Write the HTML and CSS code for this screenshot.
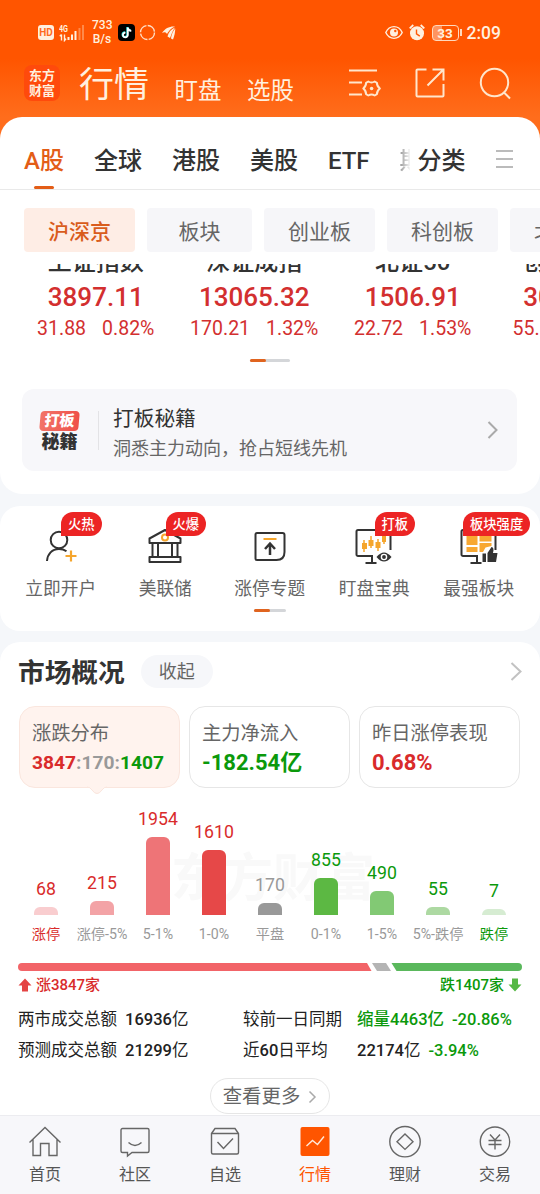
FILE: index.html
```html
<!DOCTYPE html>
<html lang="zh-CN">
<head>
<meta charset="utf-8">
<title>行情</title>
<link rel="stylesheet" href="styles.css">
</head>
<body>
<div class="app">
  <header class="header">
    <div class="status">
      <span class="hd">HD</span>
      <svg class="signal" width="26" height="18" viewBox="0 0 26 18"><path d="M2.500 10.500v6M.8 12.200L2.500 10.500M5.500 10.500v6l1.500-1.700" stroke="#fff0df" stroke-width="1.400" fill="none"/><g fill="#fff0df"><rect x="8.500" y="13" width="2" height="3"/><rect x="12" y="10.500" width="2" height="5.500"/><rect x="15.500" y="7" width="2" height="9"/></g><g fill="#ff8a4a"><rect x="19.500" y="4" width="2" height="12"/><rect x="23" y="1" width="2" height="15"/></g><text x="0" y="8" textLength="9" lengthAdjust="spacingAndGlyphs" class="net">4G</text></svg>
      <span class="speed">733<br>B/s</span>
      <svg class="tik" width="17" height="17" viewBox="0 0 17 17"><rect width="17" height="17" rx="4" fill="#000"/><path d="M9.300 3v7.600a2.400 2.400 0 1 1-2.300-2.400M9.300 3.200c.3 2 1.600 3.100 3.500 3.200" fill="none" stroke="#28e6e3" stroke-width="2"/><path d="M9.800 3.400v7.600a2.400 2.400 0 1 1-2.300-2.400M9.800 3.600c.3 2 1.600 3.100 3.500 3.200" fill="none" stroke="#fff" stroke-width="1.800"/></svg>
      <svg class="ring" width="17" height="17" viewBox="0 0 17 17"><circle cx="8.500" cy="8.500" r="7" fill="none" stroke="#ffe0c8" stroke-width="1.400" stroke-dasharray="9.700 1.300"/></svg>
      <svg class="bird" width="14" height="14" viewBox="0 0 14 14" fill="#fff0df"><path d="M0 7C3 2 8 0 13 .500C9 2 6 6 5 8C4 6 2 6 0 7z"/><path d="M5.500 10.500C6.500 6 9 3 13 1.500C10.500 5 9.500 8 8 12z"/><path d="M9 12.500C9.500 8 11 5 13.300 2.500C13 6.500 12.500 10 11 13.500z"/></svg>
      <span class="grow"></span>
      <svg class="eye" width="18" height="15" viewBox="0 0 18 15"><path d="M.8 7.500C4.500-.3 13.500-.3 17.200 7.500C13.500 15.300 4.500 15.300.8 7.500z" fill="none" stroke="#fff0df" stroke-width="1.400"/><circle cx="9" cy="7.500" r="4" fill="#fff0df"/><circle cx="10.300" cy="6" r="1.200" fill="#ff5a08"/></svg>
      <svg class="alarm" width="16" height="17" viewBox="0 0 16 17"><circle cx="8" cy="9.300" r="7" fill="#fff0df"/><path d="M.7 4.300L4.300 1M15.300 4.300L11.700 1" stroke="#fff0df" stroke-width="1.800"/><path d="M7.500 5.500v4.300l3.300 2.300" fill="none" stroke="#ff5a08" stroke-width="1.400"/></svg>
      <span class="battery">33</span><span class="tip"></span>
      <span class="clock">2:09</span>
    </div>
    <div class="titlebar">
      <div class="logo">东方<br>财富</div>
      <h1 class="title">行情</h1>
      <span class="mode">盯盘</span>
      <span class="mode">选股</span>
      <span class="grow"></span>
      <svg class="tool-a" width="34" height="32" viewBox="0 0 34 32" fill="none" stroke="#ffe6cc" stroke-width="2"><path d="M1 3.500h28M1 15.500h13M1 27.500h13"/><path d="M20.300 14.500q3.200 2 6.400 0l2.200 1.300q0 3.500 3 5.700-3 2.200-3 5.700l-2.200 1.300q-3.200-2-6.400 0l-2.200-1.300q0-3.500-2.800-5.700 2.800-2.200 2.800-5.700z" stroke-linejoin="round"/><circle cx="23.600" cy="21.500" r="1.800" fill="#ffe6cc" stroke="none"/></svg>
      <svg class="tool-b" width="30" height="30" viewBox="0 0 30 30" fill="none" stroke="#ffe6cc" stroke-width="2"><path d="M11.500 1.500H2.500a1 1 0 0 0-1 1v25a1 1 0 0 0 1 1h25a1 1 0 0 0 1-1V16M12.500 17.500L28 2M17.500 1.500h11v11"/></svg>
      <svg class="tool-c" width="33" height="33" viewBox="0 0 33 33" fill="none" stroke="#ffe6cc" stroke-width="2"><circle cx="15.500" cy="15.500" r="13.700"/><path d="M25 25.500l6 6"/></svg>
    </div>
  </header>

  <main class="content">
    <section class="card card-top">
      <nav class="tabs">
        <span class="tab active">A股</span><span class="tab">全球</span><span class="tab">港股</span><span class="tab">美股</span><span class="tab">ETF</span>
        <span class="tab cut">期</span><span class="tab sort">分类</span>
        <span class="burger"><i></i><i></i><i></i></span>
      </nav>
      <div class="chips">
        <span class="chip on">沪深京</span><span class="chip narrow">板块</span><span class="chip">创业板</span><span class="chip">科创板</span><span class="chip">北交所</span>
      </div>
      <div class="indices">
        <div class="index"><div class="name">上证指数</div><div class="price">3897.11</div><div class="change"><span>31.88</span><span>0.82%</span></div></div>
        <div class="index"><div class="name">深证成指</div><div class="price">13065.32</div><div class="change"><span>170.21</span><span>1.32%</span></div></div>
        <div class="index"><div class="name">北证50</div><div class="price">1506.91</div><div class="change"><span>22.72</span><span>1.53%</span></div></div>
        <div class="index"><div class="name">创业板指</div><div class="price">3083.72</div><div class="change"><span>55.12</span><span>1.82%</span></div></div>
      </div>
      <div class="pager"><i></i></div>
      <div class="banner">
        <div class="promo"><div class="promo-tag">打板</div><div class="promo-name">秘籍</div></div>
        <div class="rule"></div>
        <div class="banner-text"><div class="banner-title">打板秘籍</div><div class="banner-sub">洞悉主力动向，抢占短线先机</div></div>
        <svg width="12" height="20" viewBox="0 0 12 20" fill="none" stroke="#aaa" stroke-width="2"><path d="M1.500 2l8 8-8 8"/></svg>
      </div>
    </section>

    <section class="card card-apps">
      <div class="apps">
        <div class="app-item"><svg width="44" height="44" viewBox="0 0 44 44" fill="none" stroke="#333" stroke-width="2"><circle cx="20" cy="15" r="8.300"/><path d="M8 36c.5-7 5-12 12-12 3 0 5.500.8 7.500 2.200"/><path d="M32 25.500v11M26.500 31h11" stroke="#f5a52c" stroke-width="2.200"/></svg><b class="badge">火热</b><span>立即开户</span></div>
        <div class="app-item"><svg width="44" height="44" viewBox="0 0 44 44" fill="none" stroke="#333" stroke-width="2" stroke-linejoin="round"><path d="M6.500 18v-4.500L22 5l15.500 8.500V18zM6.500 37v-5h31v5zM9.500 18v14M15 18v14M29 18v14M34.500 18v14"/><circle cx="22" cy="12.500" r="3" stroke="#f5a52c"/></svg><b class="badge">火爆</b><span>美联储</span></div>
        <div class="app-item"><svg width="44" height="44" viewBox="0 0 44 44" fill="none" stroke="#333" stroke-width="2"><path d="M9 8h25.500a2 2 0 0 1 2 2v17q0 8-8 8H9a1.500 1.500 0 0 1-1.500-1.500v-24A1.500 1.500 0 0 1 9 8z"/><path d="M15.500 14h13" stroke="#f5a52c"/><path d="M22 30V20M17 24l5-5.500 5 5.500" stroke-width="2.500"/></svg><span>涨停专题</span></div>
        <div class="app-item"><svg width="44" height="44" viewBox="0 0 44 44" fill="none" stroke="#333" stroke-width="2"><path d="M21 31H6a1.500 1.500 0 0 1-1.500-1.500v-23A1.500 1.500 0 0 1 6 5h32.500v20M20 31v7M13.500 38h11"/><g stroke="#f5a52c" stroke-width="1.500"><path d="M12 15v12M19 11v12M26 14v12M32 8v11"/></g><g fill="#f5a52c" stroke="none"><path d="M10 18h5v6h-5zM16.500 15h5v6h-5zM23.500 17h5v6h-5zM30 10h4v7h-4z"/></g><path d="M24.500 32q7.500-9 15 0-7.500 9-15 0z" fill="#333" stroke="none"/><circle cx="32" cy="32" r="2.600" stroke="#fff" stroke-width="1.400"/></svg><b class="badge">打板</b><span>盯盘宝典</span></div>
        <div class="app-item"><svg width="44" height="44" viewBox="0 0 44 44" fill="none" stroke="#333" stroke-width="2"><path d="M21 31H6a1.500 1.500 0 0 1-1.500-1.500v-23A1.500 1.500 0 0 1 6 5h32.500v20M20 31v7M13.500 38h11"/><path d="M9.500 10h11v10h-11zM22.500 10h12v6.500h-12zM9.500 22h11v5h-11zM22.500 18h12v3l-6 1.500-2.500 4.500h-3.500z" fill="#f8a832" stroke="none"/><path d="M25.500 28.500H29V37h-3.500zM30.500 28l4-6q3 .5 1.500 6h4.500l-1.500 9h-8.500z" fill="#333" stroke="none"/></svg><b class="badge">板块强度</b><span>最强板块</span></div>
      </div>
      <div class="pager small"><i></i></div>
    </section>

    <section class="card market">
      <div class="market-head">
        <h2>市场概况</h2><span class="fold">收起</span><span class="grow"></span>
        <svg width="13" height="20" viewBox="0 0 13 20" fill="none" stroke="#c2c2c2" stroke-width="2"><path d="M2.500 2l9 8.500L2.500 19"/></svg>
      </div>
      <div class="summary">
        <div class="sum selected"><div>涨跌分布</div><p class="ratio"><b class="up">3847</b><b class="flat">:170:</b><b class="down">1407</b></p>
          <svg class="pointer" width="20" height="9" viewBox="0 0 20 9"><path d="M0 0h20q-3 1-5 4-5 8-10 0-2-3-5-4z" fill="#fff3ee"/><path d="M0 1q3 0 5 3 5 7 10 0 2-3 5-3" fill="none" stroke="#fae6de"/></svg></div>
        <div class="sum"><div>主力净流入</div><p><b class="down">-182.54亿</b></p></div>
        <div class="sum"><div>昨日涨停表现</div><p><b class="up">0.68%</b></p></div>
      </div>
      <div class="chart">
        <div class="watermark">东方财富</div>
        <div class="col up"><em>68</em><i class="bar b1" style="height:8px"></i><span class="lab up">涨停</span></div>
        <div class="col up"><em>215</em><i class="bar b2" style="height:14px"></i><span class="lab">涨停-5%</span></div>
        <div class="col up"><em>1954</em><i class="bar b3" style="height:78px"></i><span class="lab">5-1%</span></div>
        <div class="col up"><em>1610</em><i class="bar b4" style="height:65px"></i><span class="lab">1-0%</span></div>
        <div class="col flat"><em>170</em><i class="bar b5" style="height:12px"></i><span class="lab">平盘</span></div>
        <div class="col down"><em>855</em><i class="bar b6" style="height:37px"></i><span class="lab">0-1%</span></div>
        <div class="col down"><em>490</em><i class="bar b7" style="height:24px"></i><span class="lab">1-5%</span></div>
        <div class="col down"><em>55</em><i class="bar b8" style="height:8px"></i><span class="lab">5%-跌停</span></div>
        <div class="col down"><em>7</em><i class="bar b9" style="height:6px"></i><span class="lab down">跌停</span></div>
      </div>
      <svg class="split" width="504" height="8" viewBox="0 0 504 8"><path d="M4 0h345l4.500 8H4a4 4 0 0 1 0-8z" fill="#f26468"/><path d="M354 0h14l5 8h-14z" fill="#b4b4b4"/><path d="M373.500 0H500a4 4 0 0 1 0 8H378.500z" fill="#5ab85c"/></svg>
      <div class="counts">
        <span class="up"><svg width="14" height="14" viewBox="0 0 14 14"><path d="M7 .500L13.500 7.500H10V13.500H4V7.500H.5z" fill="#e44444"/></svg>涨3847家</span>
        <span class="down">跌1407家<svg width="14" height="14" viewBox="0 0 14 14"><path d="M7 13.500L.5 6.500H4V.500h6v6h3.500z" fill="#56b845"/></svg></span>
      </div>
      <div class="stats">
        <span>两市成交总额</span><span><b>16936</b>亿</span><span>较前一日同期</span><span class="down"><span><b>缩量4463亿</b></span><span><b>-20.86%</b></span></span>
        <span>预测成交总额</span><span><b>21299</b>亿</span><span>近<b>60</b>日平均</span><span><span><b>22174</b>亿</span><span class="down"><b>-3.94%</b></span></span>
      </div>
      <div class="more">查看更多<svg width="9" height="14" viewBox="0 0 9 14" fill="none" stroke="#aaa" stroke-width="1.500"><path d="M1.500 1.500L7 7l-5.500 5.500"/></svg></div>
    </section>
  </main>

  <nav class="bottom">
    <div class="nav"><svg width="36" height="36" viewBox="0 0 36 36"><path d="M2.500 18.500L18 3.500l15.500 15M6 15.500V31.500h7.500v-12h8.500v12h8V15.500"/></svg>首页</div>
    <div class="nav"><svg width="36" height="36" viewBox="0 0 36 36"><path d="M5.500 4.500h25a1.500 1.500 0 0 1 1.500 1.500v21a1.500 1.500 0 0 1-1.500 1.500H15L10.500 32v-3.500h-5A1.500 1.500 0 0 1 4 27V6a1.500 1.500 0 0 1 1.500-1.500zM11.500 18.500q6.500 6 13 0"/></svg>社区</div>
    <div class="nav"><svg width="36" height="36" viewBox="0 0 36 36"><path d="M4.500 9.500L8 4.500h20l3.500 5v19a1.500 1.500 0 0 1-1.500 1.500H6a1.500 1.500 0 0 1-1.500-1.500zM4.500 9.500h27M10.500 18l6 6.500 9.500-10"/></svg>自选</div>
    <div class="nav current"><svg width="36" height="36" viewBox="0 0 36 36"><rect x="3.500" y="3" width="29" height="29" rx="2" fill="#ff5500" stroke="none"/><path d="M9.500 22l6-5.500 5 4 6.500-8" stroke="#ffe9d8"/></svg>行情</div>
    <div class="nav"><svg width="36" height="36" viewBox="0 0 36 36"><circle cx="18" cy="17.700" r="15.200"/><path d="M18 10l8 7.700-8 7.700-8-7.700z"/></svg>理财</div>
    <div class="nav"><svg width="36" height="36" viewBox="0 0 36 36"><circle cx="18" cy="17.700" r="14.700"/><path d="M13 10.500l5 5.500 5-5.500M11.500 16.500h13M11.500 20.500h13M18 16v9.500"/></svg>交易</div>
  </nav>
</div>
</body>
</html>
```
FILE: styles.css
```css
* { box-sizing: border-box; }
body {
  margin: 0;
  width: 540px;
  height: 1194px;
  overflow: hidden;
  background: #f5f7fa;
  font-family: Roboto, "Noto Sans CJK SC", sans-serif;
  color: #333;
}
h1, h2, p { margin: 0; }
em { font-style: normal; }
svg { flex: none; display: block; }
.app { display: flex; flex-direction: column; height: 1194px; }
.grow { flex: 1; }
.up { color: #d92b2b; }
.down { color: #0b990b; }
.flat { color: #999; }

/* header */
.header { height: 117px; flex: none; background: linear-gradient(#ff5500 50%, #ff6d1c); color: #fff0df; }
.status { display: flex; align-items: center; height: 49px; padding: 16px 39px 0 38px; }
.hd { width: 16px; height: 15px; line-height: 15px; border-radius: 3px; background: #fff0df; color: #ff6a20; font-size: 10px; font-weight: 700; text-align: center; }
.signal { margin-left: 5px; }
.net { font: 700 9.500px Roboto, sans-serif; fill: #fff0df; }
.speed { width: 20px; margin-left: 7px; font-size: 12px; line-height: 13.500px; font-weight: 500; text-align: center; }
.tik { margin-left: 6px; }
.ring { margin-left: 4px; }
.bird { margin-left: 6px; }
.alarm { margin-left: 6px; }
.battery { width: 27px; height: 16px; margin-left: 7px; border: 1.500px solid #ffd9bd; border-radius: 4px; background: linear-gradient(90deg, #ff9460 35%, transparent 35%); font-size: 13.500px; line-height: 14px; font-weight: 700; text-align: center; }
.tip { width: 2px; height: 7px; margin-left: 1px; background: #ffd9bd; }
.clock { margin-left: 5px; font-size: 17.500px; line-height: 20px; font-weight: 500; }
.titlebar { display: flex; align-items: center; height: 68px; padding: 0 28px 0 24px; }
.logo { width: 36px; height: 36px; padding-top: 3px; border-radius: 8px; background: #ff4a0c; font-size: 13px; line-height: 15px; font-weight: 700; text-align: center; }
.title { margin-left: 19px; padding-top: 6px; font-size: 35px; line-height: 40px; font-weight: 400; }
.mode { margin-left: 25.500px; padding-top: 15px; font-size: 23.500px; line-height: 28px; }
.tool-b { margin-left: 33px; }
.tool-c { margin-left: 34px; }

/* cards */
.content { flex: 1; min-height: 0; overflow: hidden; display: flex; flex-direction: column; gap: 11.500px; background: linear-gradient(#ff6d1c 40px, #f5f7fa 40px); }
.card { flex: none; background: #fff; border-radius: 20px; overflow: hidden; }
.card-top { height: 377px; border-radius: 22px; }
.tabs { display: flex; gap: 30px; height: 73px; padding: 0 27px 0 24px; border-bottom: 1px solid #e9e9e9; font-size: 24px; line-height: 88px; font-weight: 500; }
.tab { flex: none; height: 72px; }
.active { color: #e35d17; display: flex; flex-direction: column; align-items: center; }
.active::after { content: ""; width: 20px; height: 3px; margin-top: -19px; border-radius: 2px; background: #e35d17; }
.cut { width: 10px; overflow: hidden; color: transparent; background: linear-gradient(90deg, #999, #fff 11px); -webkit-background-clip: text; background-clip: text; }
.sort { margin-left: -22px; }
.burger { display: flex; flex-direction: column; gap: 6px; width: 18px; padding-top: 33px; margin-left: auto; }
.burger i { height: 2px; background: #bbb; }
.chips { display: flex; gap: 12px; padding: 18px 0 0 24px; height: 62px; }
.chip { flex: none; width: 111px; height: 44px; border-radius: 4px; background: #f6f6f9; color: #666; font-size: 21px; line-height: 48px; text-align: center; }
.narrow { width: 105px; }
.on { background: #feede5; color: #d95c1c; font-weight: 500; }
.indices { display: flex; height: 82px; margin-top: 12px; padding-left: 16.500px; overflow: hidden; }
.index { flex: none; width: 158.500px; text-align: center; color: #d32f2f; }
.name { margin-top: -14px; font-size: 24px; line-height: 24px; font-weight: 500; color: #333; }
.price { margin-top: 8px; font-size: 26px; line-height: 30px; font-weight: 500; }
.change { display: flex; justify-content: center; gap: 16px; margin-top: 5px; font-size: 19.500px; line-height: 24px; }
.pager { width: 40px; height: 3px; margin: 12.500px auto 0; border-radius: 2px; background: #d4d6d9; }
.pager i { display: block; width: 16px; height: 3px; border-radius: 2px; background: #e0641f; }
.banner { display: flex; align-items: center; height: 82px; margin: 27.500px 23px 0 22px; padding: 0 18px; border-radius: 12px; background: #f7f7fa; }
.promo { width: 39px; padding-top: 2px; text-align: center; font-weight: 900; }
.promo-tag { height: 20px; border-radius: 4px; background: linear-gradient(90deg, #f27468, #ef5149); color: #fff; font-size: 15px; line-height: 20px; transform: skewX(-5deg); }
.promo-name { margin-top: 1px; font-size: 18px; line-height: 20px; }
.rule { width: 1px; height: 39px; margin: 0 14px 0 19px; background: #e3e3e6; }
.banner-text { flex: 1; padding-top: 7px; }
.banner-title { font-size: 20.700px; line-height: 30px; }
.banner-sub { font-size: 18px; line-height: 30px; color: #666; }

/* shortcuts */
.card-apps { height: 125px; }
.apps { display: grid; grid-template-columns: repeat(5, 104.500px); padding: 19px 0 0 8.500px; }
.app-item { position: relative; display: flex; flex-direction: column; align-items: center; color: #666; font-size: 17.700px; line-height: 24px; }
.app-item span { margin-top: 8px; }
.badge { position: absolute; left: 52.500px; top: -13px; height: 24px; padding: 0 7px; border-radius: 12px 12px 12px 0; background: #ec2424; color: #fff; font-size: 13.300px; line-height: 25px; font-weight: 500; white-space: nowrap; }
.app-item:last-child .badge { left: 36.500px; }
.small { width: 32px; margin-top: 8px; }

/* market overview */
.market { flex: 1; border-radius: 20px 20px 0 0; padding: 12px 18px 0; }
.market-head { display: flex; align-items: center; height: 34px; }
.market-head h2 { font-size: 26.700px; line-height: 34px; font-weight: 700; margin-top: 3px; }
.fold { width: 72px; height: 33px; margin-left: 16px; border-radius: 17px; background: #f6f7fa; color: #666; font-size: 18px; line-height: 34px; text-align: center; }
.summary { display: flex; gap: 9px; margin: 17.500px 0 0 1px; }
.sum { width: 161px; height: 82px; padding: 11px 0 0 12px; border: 1px solid #e6e6e6; border-radius: 16px; color: #666; font-size: 19.300px; line-height: 32px; position: relative; }
.sum p { margin-top: -3px; font-size: 22px; line-height: 32px; }
.sum .ratio { font-size: 19.200px; }
.selected { background: #fff3ee; border-color: #fae6de; }
.pointer { position: absolute; left: 67px; top: 79px; }
.chart { position: relative; display: grid; grid-template-columns: repeat(9, 56px); height: 156px; }
.watermark { position: absolute; left: 153px; top: 61px; font-size: 51px; line-height: 60px; font-weight: 700; color: #f9f9f9; }
.col { position: relative; display: flex; flex-direction: column; align-items: center; justify-content: flex-end; }
.col em { font-size: 17.700px; line-height: 22px; margin-bottom: 7px; }
.bar { width: 24px; flex: none; border-radius: 6px 6px 0 0; }
.b1 { background: #f9cdcf; } .b2 { background: #f3a3a6; } .b3 { background: #ee7477; }
.b4 { background: #e64848; } .b5 { background: #999; } .b6 { background: #5cb843; }
.b7 { background: #82c974; } .b8 { background: #add9a2; } .b9 { background: #d6ecd2; }
.lab { height: 20px; margin-top: 9px; font-size: 14.200px; line-height: 20px; white-space: nowrap; color: #999; }
.lab.up { color: #d92b2b; }
.lab.down { color: #0b990b; }
.split { margin-top: 19.500px; }
.counts { display: flex; justify-content: space-between; margin-top: 4px; font-size: 15px; line-height: 20px; font-weight: 500; }
.counts span { display: flex; align-items: center; gap: 4px; }
.stats { display: grid; grid-template-columns: 107px 118px 114px auto; margin-top: 8.500px; font-size: 16.500px; line-height: 31px; color: #222; white-space: nowrap; }
.stats b { font-weight: 500; }
.stats .down { color: #0b990b; }
.stats > span > span + span { margin-left: 8px; }
.more { display: flex; align-items: center; justify-content: center; gap: 8px; width: 120px; height: 36px; margin: 12.500px auto 0; padding-top: 1px; border: 1px solid #e6e6e6; border-radius: 18px; color: #666; font-size: 19.400px; line-height: 34px; }

/* bottom bar */
.bottom { flex: none; display: grid; grid-template-columns: repeat(6, 90px); height: 79px; border-top: 1px solid #ececf0; background: #f7f7fa; }
.nav { display: flex; flex-direction: column; align-items: center; padding-top: 8px; color: #555; font-size: 16px; line-height: 22px; }
.nav svg { margin-bottom: 4px; fill: none; stroke: #666; stroke-width: 1.400; }
.current { color: #ff5500; }
```
